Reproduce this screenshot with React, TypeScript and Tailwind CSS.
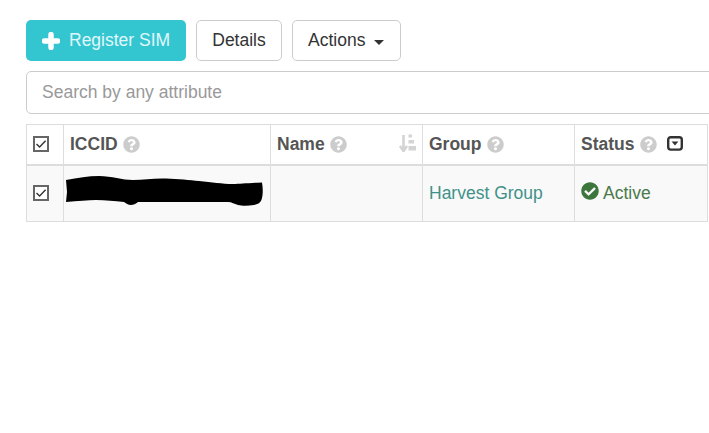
import React from 'react';
import { FaQuestionCircle, FaCheckCircle } from 'react-icons/fa';

function Checkbox() {
  return (
    <svg width="16" height="16" viewBox="0 0 16 16" className="block">
      <rect x="1" y="1" width="14" height="14" fill="#fff" stroke="#666" strokeWidth="2" />
      <path d="M3.5 8 L6.6 11 L12.6 4.8" fill="none" stroke="#333" strokeWidth="1.4" />
    </svg>
  );
}

function PlusIcon() {
  return (
    <svg width="18" height="18" viewBox="0 0 18 18" className="shrink-0">
      <path d="M9 2.5 V15.5 M2.5 9 H15.5" fill="none" stroke="#fff" strokeWidth="5.5" strokeLinecap="round" />
    </svg>
  );
}

function SortIcon() {
  return (
    <svg width="18" height="18" viewBox="0 0 18 18" className="absolute right-[6px] top-[9px]">
      <path d="M5.5 1 V16 M2 12 L5.5 17 L9 12" fill="none" stroke="#d4d4d4" strokeWidth="2.6" />
      <path d="M10.5 0.5 H14 V3.5 H10.5 Z M10.5 6 H16 V9.5 H10.5 Z M10.5 12 H18 V16.5 H10.5 Z" fill="#d4d4d4" />
    </svg>
  );
}

function CaretBoxIcon() {
  return (
    <svg width="16" height="16" viewBox="0 0 16 16" className="ml-[10px] inline-block align-[-1px]">
      <rect x="1.2" y="2.2" width="13.6" height="12.4" rx="2.5" fill="#fff" stroke="#333" strokeWidth="2.4" />
      <path d="M4.6 6.4 H11.4 L8 10.4 Z" fill="#333" />
    </svg>
  );
}

function Help({ gap = 'ml-[5px]' }: { gap?: string }) {
  return <FaQuestionCircle className={`inline-block text-[17px] text-[#ccc] align-[-3px] ${gap}`} />;
}

export default function App() {
  return (
    <div className="h-[433px] w-[709px] overflow-hidden bg-white font-['Liberation_Sans',Arial,sans-serif] text-[17.5px] leading-[25px] text-[#555]">
      <div className="pl-[26px] pt-[20px]">
        <div className="flex gap-[10px]">
          <button className="flex h-[41px] w-[160px] items-center gap-[9px] rounded-[5px] bg-[#33c6d1] pl-[16px] text-[#e0f7f9]">
            <PlusIcon />
            Register SIM
          </button>
          <button className="h-[41px] w-[86px] rounded-[5px] border border-[#ccc] bg-white text-[#333]">Details</button>
          <button className="flex h-[41px] w-[109px] items-center gap-[9px] rounded-[5px] border border-[#ccc] bg-white pl-[15px] text-[#333]">
            Actions
            <span className="mt-[3px] border-x-[5px] border-t-[5px] border-x-transparent border-t-[#333]" />
          </button>
        </div>
        <div className="mt-[10px] flex h-[43px] w-[700px] items-center rounded-[5px] border border-[#ccc] pl-[15px] text-[#999]">
          Search by any attribute
        </div>
        <table className="mt-[10px] w-[681px] table-fixed border-collapse">
          <colgroup>
            <col className="w-[37px]" />
            <col className="w-[207px]" />
            <col className="w-[152px]" />
            <col className="w-[152px]" />
            <col className="w-[133px]" />
          </colgroup>
          <thead>
            <tr className="h-[40px] text-left font-bold">
              <th className="border border-b-2 border-[#ddd] pl-[6px]"><Checkbox /></th>
              <th className="border border-b-2 border-[#ddd] pl-[6px]">ICCID<Help /></th>
              <th className="relative border border-b-2 border-[#ddd] pl-[6px]">
                Name<Help />
                <SortIcon />
              </th>
              <th className="border border-b-2 border-[#ddd] pl-[6px]">Group<Help /></th>
              <th className="border border-b-2 border-[#ddd] pl-[6px]">
                Status<Help gap="ml-[6px]" />
                <CaretBoxIcon />
              </th>
            </tr>
          </thead>
          <tbody>
            <tr className="h-[57px] bg-[#f9f9f9]">
              <td className="border border-[#ddd] pl-[6px]"><Checkbox /></td>
              <td className="border border-[#ddd] pl-[2px]">
                {/* hand-scribbled redaction over the ICCID */}
                <svg width="197" height="30" viewBox="0 0 197 30" className="mb-[4px] block">
                  <path d="M0 4 C12 2 22 0 33 0 C46 0 56 4 67 4 C78 4 88 2 100 2.5 C112 3 124 4 133 5 C146 6 156 8 167 8 C174 8 182 7 196 6.5 C197 12 197 18 196 22 C195 26 193 28 188 29 C182 30 176 30 172 29 C168 28 166 26 162 26 L100 26 L72 26 C70 28 67 29 65 29 C62 29 60 27 58 26 C48 25 40 24 30 24 C22 24 12 25 0 26 L1 16 Z" fill="#000" />
                </svg>
              </td>
              <td className="border border-[#ddd]" />
              <td className="border border-[#ddd] pl-[6px] text-[#3f9189]">Harvest Group</td>
              <td className="border border-[#ddd] pl-[6px] text-[#4a7a4b]">
                <FaCheckCircle className="mr-[4px] inline-block align-[-1px] text-[18px] text-[#3c763d]" />
                Active
              </td>
            </tr>
          </tbody>
        </table>
      </div>
    </div>
  );
}
